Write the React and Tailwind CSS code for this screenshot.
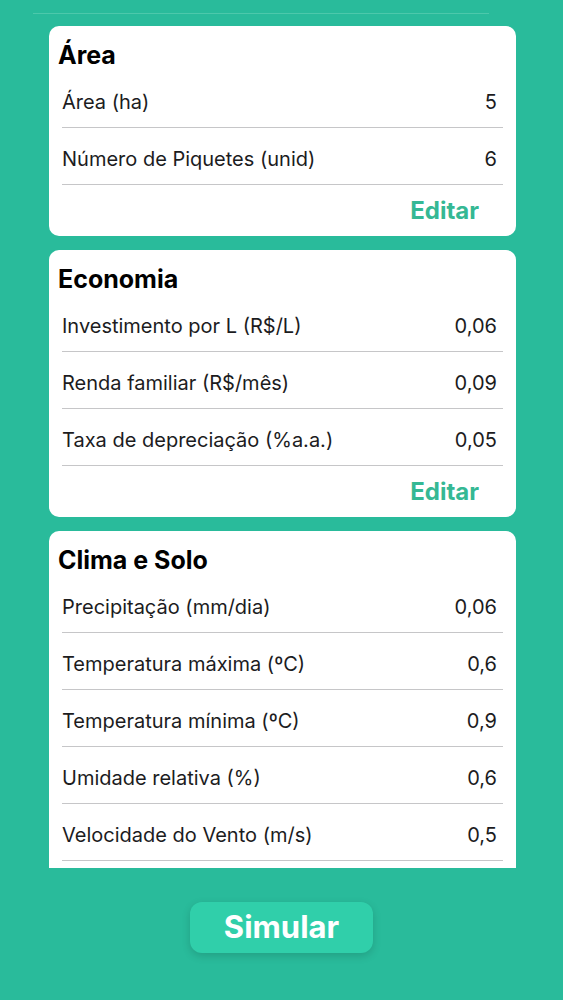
import React from "react";

const sections = [
  {
    title: "Área",
    editable: true,
    rows: [
      ["Área (ha)", "5"],
      ["Número de Piquetes (unid)", "6"],
    ],
  },
  {
    title: "Economia",
    editable: true,
    rows: [
      ["Investimento por L (R$/L)", "0,06"],
      ["Renda familiar (R$/mês)", "0,09"],
      ["Taxa de depreciação (%a.a.)", "0,05"],
    ],
  },
  {
    title: "Clima e Solo",
    editable: false,
    rows: [
      ["Precipitação (mm/dia)", "0,06"],
      ["Temperatura máxima (ºC)", "0,6"],
      ["Temperatura mínima (ºC)", "0,9"],
      ["Umidade relativa (%)", "0,6"],
      ["Velocidade do Vento (m/s)", "0,5"],
    ],
  },
];

function Section({ title, rows, editable }) {
  return (
    <div
      className={
        "ml-[49px] w-[467px] bg-white rounded-[10px] mb-[14px] " +
        (editable ? "" : "pb-[40px]")
      }
    >
      <h2 className="pl-[9px] pt-[14px] pb-[1px] text-[25px] leading-[30px] font-bold text-black">
        {title}
      </h2>
      <div className="px-[13px]">
        {rows.map(([label, value]) => (
          <div
            key={label}
            className="h-[57px] pt-[6px] flex items-center justify-between border-b border-[#c6c6c8] text-[20px] text-[#1c1c1e]"
          >
            <span>{label}</span>
            <span className="pr-[6px]">{value}</span>
          </div>
        ))}
      </div>
      {editable && (
        <div className="h-[51px] flex items-center justify-end pr-[37px]">
          <button className="text-[24px] font-bold text-[#35b894]">Editar</button>
        </div>
      )}
    </div>
  );
}

export default function App() {
  return (
    <div
      className="h-[1000px] w-full bg-[#29bb9b] flex flex-col overflow-hidden"
      style={{ fontFamily: "Inter, 'Noto Sans', sans-serif" }}
    >
      <div className="h-[13px] shrink-0" />
      <div className="ml-[33px] w-[456px] h-px bg-[#4cc8ab] shrink-0" />
      <div className="h-[854px] overflow-hidden shrink-0 pt-[12px]">
        {sections.map((s) => (
          <Section key={s.title} {...s} />
        ))}
      </div>
      <div className="flex justify-center pt-[34px]">
        <button className="w-[183px] h-[51px] rounded-[12px] bg-[#30cfaa] text-white text-[31px] font-bold shadow-[0_3px_8px_rgba(0,0,0,0.15)]">
          Simular
        </button>
      </div>
    </div>
  );
}
